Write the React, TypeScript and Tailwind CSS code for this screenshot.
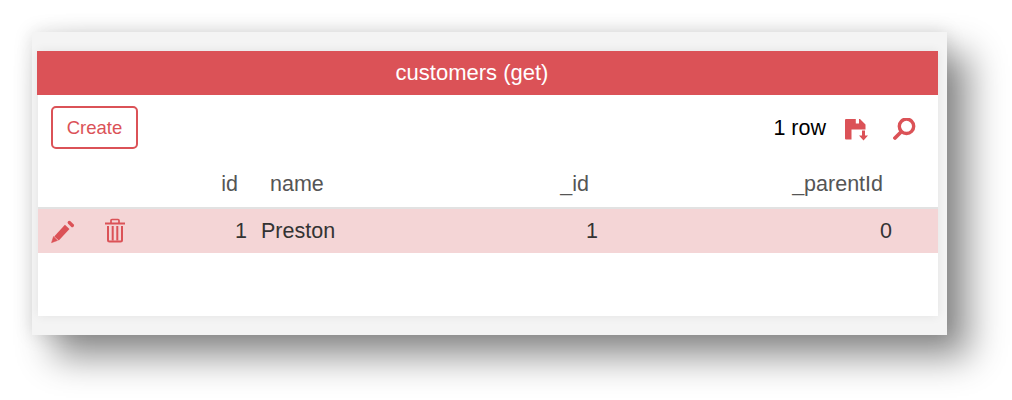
const RED = '#db5257'

function PencilIcon() {
  return (
    <svg width="26" height="26" viewBox="0 0 26 26" fill={RED} stroke={RED}>
      <path d="M1.5 24.7 L3.5 18.5 L7.5 22.5 Z" strokeWidth="0.5" />
      <path d="M6.5 20.5 L17.2 8.9" strokeWidth="6.2" fill="none" />
      <path d="M19.3 4.5 L22.3 7.5" strokeWidth="3.4" strokeLinecap="round" fill="none" />
    </svg>
  )
}

function TrashIcon() {
  return (
    <svg width="22" height="26" viewBox="0 0 22 26" fill="none" stroke={RED} strokeWidth="2">
      <path d="M1 5.5 H21" />
      <path d="M7 5 V2.5 Q7 1.5 8 1.5 H14 Q15 1.5 15 2.5 V5" strokeWidth="1.7" />
      <path d="M4 8 V22 Q4 23.5 5.5 23.5 H16.5 Q18 23.5 18 22 V8" />
      <path d="M8.7 8 V22.5 M13.3 8 V22.5" />
    </svg>
  )
}

function SaveDownIcon() {
  return (
    <svg width="23" height="23" viewBox="0 0 23 23" fill={RED}>
      <path fillRule="evenodd" d="M0 2 Q0 1 1 1 H10.8 V5.6 H14 V1 H15 L20.5 6.5 V11.5 H6.5 V21.5 H1 Q0 21.5 0 20.5 Z" />
      <path d="M17 12.5 H20 V17.5 H23 L18.5 22.5 L14 17.5 H17 Z" />
    </svg>
  )
}

function SearchIcon() {
  return (
    <svg width="24" height="24" viewBox="0 0 24 24" fill="none" stroke={RED}>
      <circle cx="13.5" cy="8.3" r="7.2" strokeWidth="3.4" />
      <path d="M8 14 L2 20" strokeWidth="3.8" strokeLinecap="round" />
    </svg>
  )
}

export default function App() {
  return (
    <div className="h-[400px] w-[1012px] overflow-hidden bg-white pl-8 pt-8 font-['Liberation_Sans',Arial,sans-serif]">
      {/* Screenshot frame with the heavy drop shadow */}
      <div className="h-[303px] w-[915px] bg-[#f4f4f4] pl-[6px] pt-[19px] shadow-[22px_22px_34px_rgba(0,0,0,0.44),0_0_18px_rgba(0,0,0,0.13)]">
        <div className="h-[265px] w-[900px] bg-white shadow-[0_0_10px_rgba(0,0,0,0.07)]">
          <div className="-ml-px flex h-11 w-[901px] items-center justify-center bg-[#db5257] pb-[2px] pr-[31px] text-[22px] text-white">
            customers (get)
          </div>

          <div className="flex items-start justify-between pl-[13px] pr-[21px] pt-[11px]">
            <button className="flex h-[43px] w-[87px] items-center justify-center rounded-[5px] border-2 border-[#db5257] text-[18.5px] text-[#db5257]">
              Create
            </button>
            <div className="flex items-start pt-[11px]">
              <span className="mr-[19px] text-[21.5px] leading-[22px] text-black">1 row</span>
              <span className="mt-[1px]">
                <SaveDownIcon />
              </span>
              <span className="ml-[25px] mt-[1px]">
                <SearchIcon />
              </span>
            </div>
          </div>

          {/* Header row */}
          <div className="mt-[12px] flex h-[48px] items-center border-b-2 border-[#e2e2e2] text-[21.5px] text-[#555555]">
            <span className="w-[200px] text-right">id</span>
            <span className="ml-[32px] w-[100px]">name</span>
            <span className="w-[219px] text-right">_id</span>
            <span className="w-[294px] text-right">_parentId</span>
          </div>

          {/* Data row */}
          <div className="flex h-[44px] items-center bg-[#f4d5d6] text-[21.5px] text-[#333333]">
            <span className="ml-[12px] flex w-[54px] justify-start">
              <PencilIcon />
            </span>
            <span className="flex w-[131px] justify-start">
              <TrashIcon />
            </span>
            <span className="w-[12px] text-right">1</span>
            <span className="ml-[14px] w-[100px]">Preston</span>
            <span className="w-[237px] text-right">1</span>
            <span className="w-[294px] text-right">0</span>
          </div>
        </div>
      </div>
    </div>
  )
}
